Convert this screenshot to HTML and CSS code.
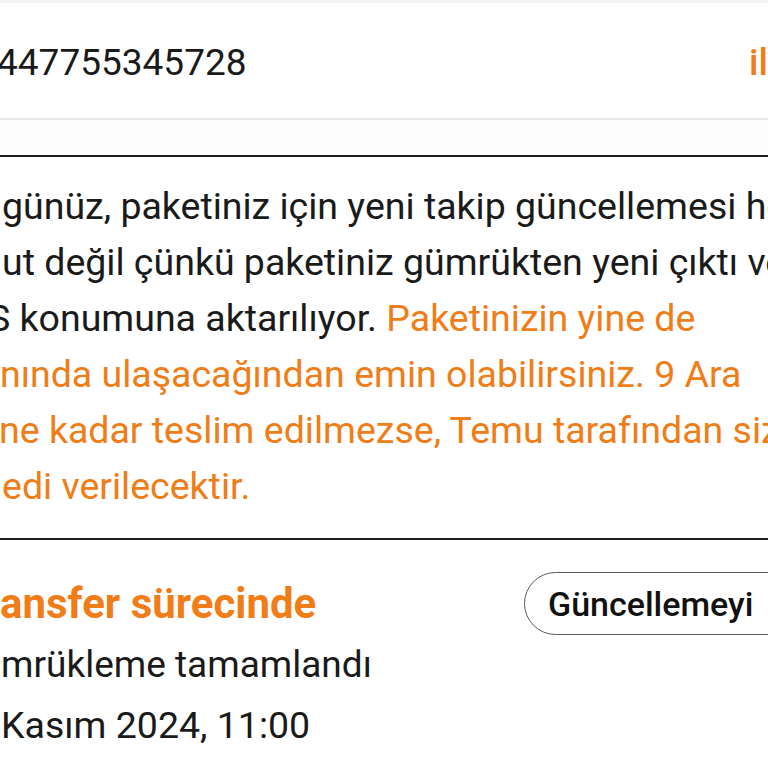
FILE: index.html
```html
<!DOCTYPE html>
<html lang="tr">
<head>
<meta charset="utf-8">
<link rel="stylesheet" href="styles.css">
</head>
<body>
<div class="viewport">
  <div class="page">
    <section class="track-row">
      <span class="track-no">447755345728</span>
      <span class="track-link">il</span>
    </section>
    <div class="spacer"></div>
    <section class="notice">
      <div class="line">günüz, paketiniz için yeni takip güncellemesi henüz</div>
      <div class="line">ut değil çünkü paketiniz gümrükten yeni çıktı ve</div>
      <div class="line cut-s">S konumuna aktarılıyor. <span class="hl">Paketinizin yine de</span></div>
      <div class="line hl cut-a">nında ulaşacağından emin olabilirsiniz. 9 Ara</div>
      <div class="line hl cut-b">ne kadar teslim edilmezse, Temu tarafından size</div>
      <div class="line hl">edi verilecektir.</div>
    </section>
    <section class="event">
      <div class="event-head">
        <h2 class="event-title">ansfer sürecinde</h2>
        <button class="btn">Güncellemeyi</button>
      </div>
      <div class="event-text">mrükleme tamamlandı</div>
      <div class="event-text date">Kasım 2024, 11:00</div>
    </section>
  </div>
</div>
</body>
</html>
```
FILE: styles.css
```css
html, body {
  margin: 0;
  padding: 0;
  background: #ffffff;
}
.viewport {
  width: 768px;
  height: 768px;
  overflow: hidden;
  font-family: Roboto, "Noto Sans", sans-serif;
  color: #1a1a1a;
}
.page {
  width: 900px;
}
.track-row {
  display: flex;
  justify-content: space-between;
  align-items: flex-start;
  border-top: 3px solid #f3f3f3;
  border-bottom: 2px solid #e8e8e8;
  height: 120px;
  box-sizing: border-box;
  padding-top: 39px;
  width: 768px;
}
.track-no {
  font-size: 37px;
  line-height: 42px;
  margin-left: -3px;
}
.track-link {
  font-size: 37px;
  line-height: 42px;
  color: #f07d18;
  font-weight: 500;
  width: 19px;
  overflow: hidden;
}
.spacer {
  height: 35px;
  border-bottom: 2px solid #1e1e1e;
  background: #fdfdfd;
}
.notice {
  padding: 21px 0 24px 2px;
  border-bottom: 2px solid #1e1e1e;
  font-size: 37.5px;
  line-height: 56px;
}
.line {
  white-space: nowrap;
}
.hl {
  color: #f07d18;
}
.cut-s {
  text-indent: -14px;
}
.cut-a {
  text-indent: -2px;
}
.cut-b {
  text-indent: -3px;
}
.event-head {
  display: flex;
  align-items: center;
  padding-top: 32px;
  height: 63px;
}
.event-title {
  flex: 1;
  margin: 0;
  font-size: 42px;
  line-height: 50px;
  font-weight: 700;
  color: #f07d18;
  white-space: nowrap;
}
.btn {
  flex-shrink: 0;
  width: 360px;
  height: 63px;
  box-sizing: border-box;
  border: 1.5px solid #5a5a5a;
  border-radius: 32px;
  background: #fff;
  font-family: Roboto, sans-serif;
  font-size: 34px;
  font-weight: 500;
  color: #111;
  text-align: left;
  padding: 0 0 0 23px;
  margin-right: 16px;
  white-space: nowrap;
}
.event-text {
  font-size: 37px;
  line-height: 60px;
  padding-left: 1px;
  white-space: nowrap;
}
.date {
  font-size: 37.5px;
}
```
